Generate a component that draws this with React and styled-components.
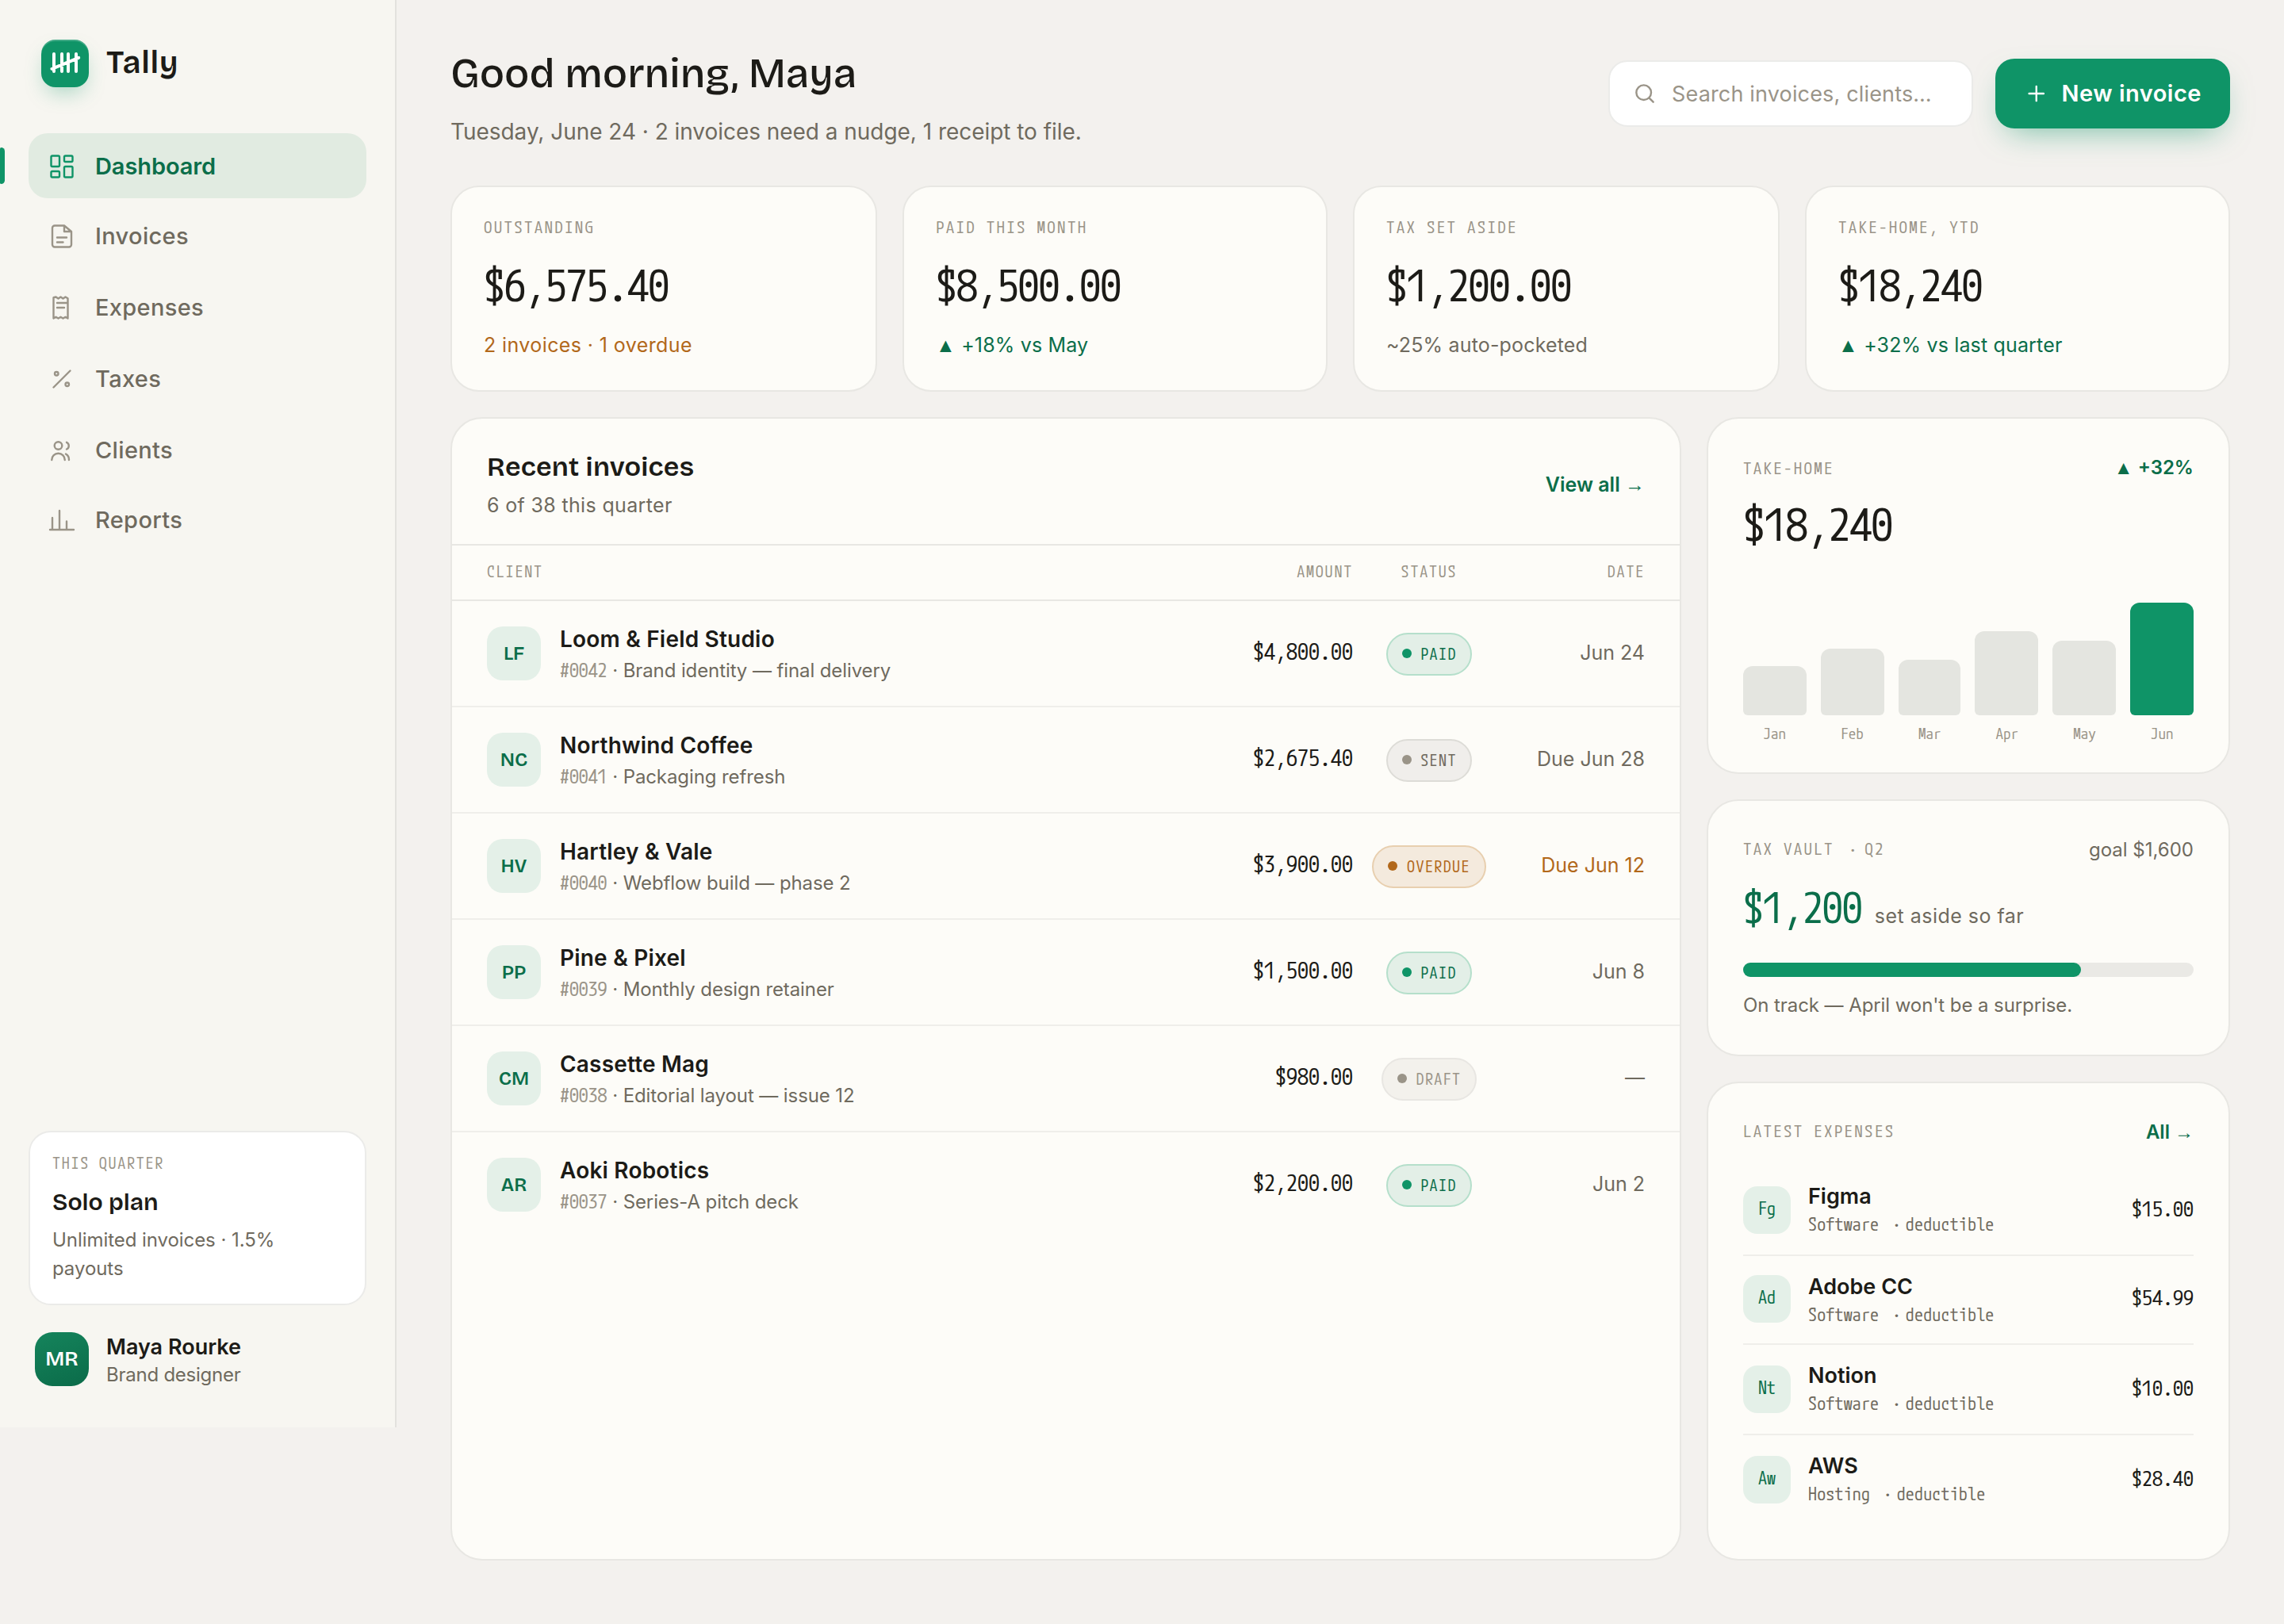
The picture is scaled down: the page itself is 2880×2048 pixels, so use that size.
import React from "react";
import styled, { createGlobalStyle, css } from "styled-components";

const sans = `"Inter", "Liberation Sans", sans-serif`;
const display = `"Bricolage Grotesque", "Inter", sans-serif`;
const mono = `"M PLUS 1 Code", "Noto Sans Mono CJK SC", "Liberation Mono", monospace`;

const ink = "#1c1b17";
const muted = "#6f6a5e";
const faint = "#9a9488";
const green = "#0f9467";
const deep = "#0b6e4a";
const amber = "#b2681a";
const line = "#e8e7e3";
const softLine = "#efeeea";
const tint = "#e4f0e8";

const GlobalStyle = createGlobalStyle`
  * {
    box-sizing: border-box;
  }

  body {
    margin: 0;
    background: #f3f1ee;
  }

  h1, h2, p {
    margin: 0;
  }
`;

const Page = styled.div`
  width: 2880px;
  height: 2048px;
  overflow: hidden;
`;

/* the design is 1440 x 1024, shown at double size */
const Shell = styled.div`
  width: 1440px;
  height: 1024px;
  transform: scale(2);
  transform-origin: 0 0;
  display: flex;
  align-items: flex-start;
  background: #f3f1ee;
  color: ${ink};
  font-family: ${sans};
  font-size: 14px;
  font-optical-sizing: none;
`;

const Label = styled.div`
  font-family: ${mono};
  font-size: 10.5px;
  line-height: 16px;
  letter-spacing: 1.13px;
  text-transform: uppercase;
  color: ${faint};
`;

/* arrows and triangles are lighter than the text font draws them */
const Glyph = styled.span`
  font-family: "Liberation Sans", sans-serif;
  line-height: 1;
`;

/* the mono font has a narrow middle dot, so give it a full cell */
const Dot = styled.span`
  display: inline-block;
  width: ${({ $wide }) => ($wide ? "0.61em" : "0.51em")};
  text-align: center;
`;

/* ---- sidebar ---- */

const Sidebar = styled.aside`
  width: 250px;
  height: 900px;
  padding: 25px 18px 26px;
  display: flex;
  flex-direction: column;
  background: #f7f6f1;
  border-right: 1px solid #e3e2de;
`;

const Brand = styled.div`
  display: flex;
  align-items: center;
  gap: 11px;
  padding: 0 8px;
  height: 30px;
  font-family: ${display};
  font-size: 20px;
  font-weight: 600;
  line-height: 24px;
  letter-spacing: 0.35px;
`;

const Mark = styled.div`
  width: 30px;
  height: 30px;
  border-radius: 9px;
  background: ${green};
  box-shadow: inset 0 1px 0 rgba(255, 255, 255, 0.2),
    0 6px 14px -4px rgba(15, 148, 103, 0.4);

  svg {
    display: block;
  }
`;

const BrandName = styled.span`
  padding-bottom: 2.6px;
`;

const Nav = styled.nav`
  display: flex;
  flex-direction: column;
  gap: 4px;
  margin-top: 29px;
`;

const NavItem = styled.a`
  position: relative;
  display: flex;
  align-items: center;
  gap: 12px;
  height: 40.75px;
  padding: 0.7px 12px 0;
  border-radius: 12px;
  font-size: 14.5px;
  font-weight: 500;
  line-height: 22px;
  letter-spacing: 0.17px;
  color: ${muted};

  svg {
    color: ${faint};
  }

  ${({ $active }) =>
    $active &&
    css`
      background: #e1ebe1;
      color: ${deep};
      font-weight: 600;
      letter-spacing: -0.05px;

      svg {
        color: ${green};
      }

      &::before {
        content: "";
        position: absolute;
        left: -18px;
        top: 9px;
        width: 3px;
        height: 23px;
        border-radius: 1px 3px 3px 1px;
        background: ${green};
      }
    `}
`;

const PlanCard = styled.div`
  margin-top: auto;
  height: 110px;
  padding: 12px 14px;
  border: 1px solid #ebebe9;
  border-radius: 14px;
  background: #fff;
`;

const PlanLabel = styled(Label)`
  font-size: 10px;
  line-height: 15px;
  letter-spacing: 0.87px;
`;

const PlanName = styled.div`
  margin-top: 6px;
  font-family: ${display};
  font-size: 15px;
  font-weight: 600;
  line-height: 22px;
`;

const PlanText = styled.p`
  margin-top: 3.8px;
  font-size: 12px;
  line-height: 18px;
  letter-spacing: -0.03px;
  color: ${muted};
`;

const User = styled.div`
  display: flex;
  align-items: center;
  gap: 11px;
  height: 34px;
  margin-top: 17px;
  padding: 0 4px;
`;

const UserBadge = styled.div`
  display: flex;
  align-items: center;
  justify-content: center;
  width: 34px;
  height: 34px;
  border-radius: 11px;
  background: linear-gradient(160deg, #15845c, #0b6b49);
  color: #fff;
  font-family: ${display};
  font-size: 13px;
  font-weight: 600;
`;

const UserName = styled.div`
  padding-top: 1px;
  font-size: 13.5px;
  font-weight: 600;
  line-height: 18px;
`;

const UserRole = styled.div`
  padding-top: 0.8px;
  font-size: 12px;
  line-height: 16px;
  letter-spacing: -0.12px;
  color: ${muted};
`;

/* ---- main column ---- */

const Main = styled.main`
  width: 1190px;
  padding: 24px 34px 40px;
`;

const Header = styled.header`
  display: flex;
  align-items: center;
  height: 70px;
`;

const Greeting = styled.div`
  flex: 1;
  padding-top: 5px;
`;

const Title = styled.h1`
  font-family: ${display};
  font-size: 26px;
  font-weight: 500;
  line-height: 33px;
`;

const Subtitle = styled.p`
  margin-top: 9px;
  font-size: 14px;
  line-height: 21px;
  letter-spacing: -0.02px;
  color: ${muted};
`;

const Search = styled.div`
  display: flex;
  align-items: center;
  gap: 9px;
  width: 230px;
  height: 42px;
  padding: 0 14px;
  border: 1px solid #ebebe9;
  border-radius: 12px;
  background: #fff;
  color: ${faint};
  font-size: 13.5px;
  letter-spacing: 0.08px;
`;

const NewButton = styled.button`
  display: flex;
  align-items: center;
  gap: 8px;
  width: 148px;
  height: 44px;
  margin-left: 14px;
  padding: 0 18px 1px;
  border: none;
  border-radius: 12px;
  background: ${green};
  box-shadow: 0 8px 20px -8px rgba(15, 148, 103, 0.6);
  color: #fff;
  font-family: ${sans};
  font-size: 14.5px;
  font-weight: 600;
  letter-spacing: 0.25px;
  white-space: nowrap;
`;

const Stats = styled.section`
  display: grid;
  grid-template-columns: 269px 268px 269px 268px;
  gap: 16px;
  margin-top: 23px;
`;

const Card = styled.section`
  border: 1px solid ${line};
  border-radius: 20px;
  background: #fdfcf8;
`;

const StatCard = styled(Card)`
  height: 130px;
  padding: 17px 20px 0;
  border-radius: 18px;
`;

const StatValue = styled.div`
  margin-top: 11.5px;
  font-family: ${mono};
  font-size: 27px;
  line-height: 34px;
  letter-spacing: -0.55px;
`;

const tones = { amber, green: deep, muted };

const StatNote = styled.div`
  margin-top: 12.5px;
  font-size: 12.5px;
  line-height: 18px;
  letter-spacing: ${({ $tone }) => ($tone === "amber" ? "0.2px" : "0.08px")};
  color: ${({ $tone }) => tones[$tone]};
`;

const Columns = styled.div`
  display: grid;
  grid-template-columns: 776px 330px;
  gap: 16px;
  height: 721px;
  margin-top: 16px;
`;

/* ---- invoices ---- */

const InvoiceHead = styled.div`
  display: flex;
  align-items: center;
  justify-content: space-between;
  height: 80px;
  padding: 4px 22px 0;
  border-bottom: 1px solid ${line};
`;

const PanelTitle = styled.h2`
  padding-bottom: 2.4px;
  font-family: ${display};
  font-size: 17px;
  font-weight: 600;
  line-height: 24px;
  letter-spacing: 0.09px;
`;

const PanelNote = styled.p`
  font-size: 12.5px;
  line-height: 19px;
  letter-spacing: 0.17px;
  color: ${muted};
`;

const Link = styled.a`
  padding-top: ${({ $small }) => ($small ? 1.4 : 0.8)}px;
  font-size: ${({ $small }) => ($small ? 12 : 12.5)}px;
  font-weight: 600;
  line-height: 18px;
  color: ${deep};
`;

const Trend = styled(Link)`
  padding-top: 0;
`;

const Row = styled.div`
  display: grid;
  grid-template-columns: 1fr 100px 96px 88px;
  align-items: center;
  height: 67px;
  padding: 0 22px;
  border-bottom: 1px solid ${softLine};

  &:last-child {
    border-bottom-color: transparent;
  }
`;

const HeadRow = styled(Row)`
  height: 35px;
  padding-bottom: 2px;
  border-bottom-color: ${line};
  font-family: ${mono};
  font-size: 10px;
  letter-spacing: 0.9px;
  text-transform: uppercase;
  color: ${faint};
`;

const Cell = styled.div`
  text-align: ${({ $align }) => $align || "left"};
`;

const Client = styled.div`
  display: flex;
  align-items: center;
  gap: 12px;
`;

const Initials = styled.div`
  display: flex;
  align-items: center;
  justify-content: center;
  width: 34px;
  height: 34px;
  border-radius: 10px;
  background: ${tint};
  color: ${deep};
  font-family: ${display};
  font-size: 12px;
  font-weight: 600;
`;

const ClientName = styled.div`
  padding: 1px 0 2px;
  font-size: 14px;
  font-weight: 600;
  line-height: 19.6px;
  letter-spacing: 0.1px;
`;

const ClientWork = styled.div`
  font-size: 12px;
  line-height: 18px;
  letter-spacing: -0.05px;
  color: ${muted};

  span {
    font-family: ${mono};
    line-height: 12px;
    color: ${faint};
  }
`;

const Amount = styled.div`
  padding-bottom: 2.4px;
  font-family: ${mono};
  font-size: ${({ $size }) => $size || 14}px;
  line-height: 20px;
  text-align: right;
`;

const DateText = styled.div`
  padding-bottom: 1px;
  font-size: 12.5px;
  line-height: 20px;
  text-align: right;
  color: ${({ $late }) => ($late ? amber : muted)};
`;

const pillColors = {
  Paid: { bg: "#e3efe7", edge: "#b5dfcb", text: deep, dot: green },
  Sent: { bg: "#f0eeeb", edge: "#dddcd7", text: muted, dot: faint },
  Overdue: { bg: "#f4eadd", edge: "#e8cfaf", text: amber, dot: amber },
  Draft: { bg: "#f3f1ec", edge: "#e8e6e2", text: faint, dot: faint },
};

const Pill = styled.span`
  display: inline-flex;
  align-items: center;
  gap: 6px;
  height: 27px;
  margin-top: 1px;
  padding: 0 9px 0.6px;
  border: 1px solid ${({ $status }) => pillColors[$status].edge};
  border-radius: 14px;
  background: ${({ $status }) => pillColors[$status].bg};
  color: ${({ $status }) => pillColors[$status].text};
  font-family: ${mono};
  font-size: 10px;
  line-height: 15px;
  letter-spacing: 0.7px;
  text-transform: uppercase;
  vertical-align: top;

  &::before {
    content: "";
    width: 6px;
    height: 6px;
    border-radius: 50%;
    background: ${({ $status }) => pillColors[$status].dot};
  }
`;

/* ---- right column ---- */

const SideColumn = styled.div`
  display: flex;
  flex-direction: column;
  gap: 16px;
`;

const SideCard = styled(Card)`
  height: ${({ $height }) => $height}px;
  padding: 20px 22px 0;
`;

const CardTop = styled.div`
  display: flex;
  align-items: center;
  justify-content: space-between;
  height: 20px;
`;

const TakeHomeCard = styled(SideCard)`
  padding-top: 21px;
`;

const TakeHome = styled.div`
  margin-top: 8px;
  font-family: ${mono};
  font-size: 28px;
  line-height: 36px;
  letter-spacing: -0.02em;
`;

const Chart = styled.div`
  display: grid;
  grid-template-columns: repeat(6, 1fr);
  align-items: end;
  gap: 9px;
  height: 89px;
  margin-top: 31px;
`;

const Month = styled.div`
  font-family: ${mono};
  font-size: 9.5px;
  line-height: 14px;
  text-align: center;
  color: ${faint};
`;

const Bar = styled.div`
  margin-bottom: 4px;
  border-radius: 6px 6px 3px 3px;
  background: ${({ $current }) => ($current ? green : "#e4e5e0")};
`;

const Goal = styled.span`
  padding-top: 1.8px;
  font-size: 12px;
  line-height: 18px;
  color: ${muted};
`;

const Vault = styled.div`
  display: flex;
  align-items: baseline;
  gap: 8px;
  margin-top: 9px;
  height: 36px;
`;

const VaultValue = styled.span`
  font-family: ${mono};
  font-size: 26px;
  line-height: 36px;
  letter-spacing: -0.02em;
  color: ${deep};
`;

const VaultCaption = styled.span`
  font-size: 12.5px;
  line-height: 18px;
  letter-spacing: 0.24px;
  color: ${muted};
`;

const Track = styled.div`
  height: 9px;
  margin-top: 17px;
  border-radius: 5px;
  background: #eae9e5;
`;

const Fill = styled.div`
  height: 9px;
  border-radius: 5px;
  background: ${green};
`;

const VaultNote = styled.p`
  margin-top: 9px;
  font-size: 12px;
  line-height: 18px;
  letter-spacing: -0.04px;
  color: ${muted};
`;

const ExpenseList = styled.div`
  margin-top: 12.1px;
`;

const Expense = styled.div`
  display: flex;
  align-items: center;
  gap: 11px;
  height: 56.55px;
  border-bottom: 1px solid ${softLine};

  &:last-child {
    border-bottom: none;
  }
`;

const Vendor = styled.div`
  display: flex;
  align-items: center;
  justify-content: center;
  width: 30px;
  height: 30px;
  padding-bottom: 2px;
  border-radius: 9px;
  background: ${tint};
  color: ${deep};
  font-family: ${mono};
  font-size: 11px;
`;

const ExpenseText = styled.div`
  flex: 1;
  padding-bottom: 1.4px;
`;

const ExpenseName = styled.div`
  font-size: 13.5px;
  font-weight: 600;
  line-height: 20px;
`;

const ExpenseKind = styled.div`
  font-family: ${mono};
  font-size: 11px;
  line-height: 16px;
  letter-spacing: 0.08px;
  color: ${muted};
`;

/* ---- icons ---- */

const Icon = ({ size = 18, weight = 1.6, children }) => (
  <svg
    width={size}
    height={size}
    viewBox="0 0 24 24"
    fill="none"
    stroke="currentColor"
    strokeWidth={weight}
    strokeLinecap="round"
    strokeLinejoin="round"
  >
    {children}
  </svg>
);

const TallyMark = () => (
  <svg width="30" height="30" viewBox="0 0 30 30" fill="none" stroke="#fff" strokeWidth="2" strokeLinecap="round">
    <path d="M8 9v11M13 9v11M17 9v11M22 9v11M6.7 18.4L23.6 11.4" />
  </svg>
);

const navItems = [
  {
    name: "Dashboard",
    icon: (
      <>
        <rect x="3" y="3" width="7" height="9" rx="1" />
        <rect x="14" y="3" width="7" height="5" rx="1" />
        <rect x="14" y="12" width="7" height="9" rx="1" />
        <rect x="3" y="16" width="7" height="5" rx="1" />
      </>
    ),
  },
  {
    name: "Invoices",
    icon: <path d="M14 3H6a2 2 0 0 0-2 2v14a2 2 0 0 0 2 2h12a2 2 0 0 0 2-2V8l-6-5v5h6M8 13h8M8 17h5" />,
  },
  {
    name: "Expenses",
    icon: <path d="M5 3.5L7 3l2 1.4L11 3l2 1.4L15 3l2 1.2V21l-2-1.2-2 1.2-2-1.2L9 21l-2-1.2L5 21V3.5zM8 8h8M8 12h6" />,
  },
  {
    name: "Taxes",
    icon: (
      <>
        <path d="M5 19L19 5" />
        <circle cx="7.5" cy="7.5" r="1.5" />
        <circle cx="16.5" cy="16.5" r="1.5" />
      </>
    ),
  },
  {
    name: "Clients",
    icon: (
      <>
        <circle cx="9" cy="8" r="3.2" />
        <path d="M3.5 20a5.5 5.5 0 0 1 11 0M16 5.2a3.2 3.2 0 0 1 0 5.8M15.3 15a5.5 5.5 0 0 1 2.7 5" />
      </>
    ),
  },
  {
    name: "Reports",
    icon: <path d="M4 20V10M10 20V4M16 20v-7M2 20h20" />,
  },
];

const stats = [
  { label: "Outstanding", value: "$6,575.40", note: "2 invoices · 1 overdue", tone: "amber" },
  { label: "Paid this month", value: "$8,500.00", note: "+18% vs May", tone: "green", up: true },
  { label: "Tax set aside", value: "$1,200.00", note: "~25% auto-pocketed", tone: "muted" },
  { label: "Take-home, YTD", value: "$18,240", note: "+32% vs last quarter", tone: "green", up: true },
];

const invoices = [
  { mark: "LF", name: "Loom & Field Studio", id: "#0042", work: "Brand identity — final delivery", amount: "$4,800.00", status: "Paid", date: "Jun 24" },
  { mark: "NC", name: "Northwind Coffee", id: "#0041", work: "Packaging refresh", amount: "$2,675.40", status: "Sent", date: "Due Jun 28" },
  { mark: "HV", name: "Hartley & Vale", id: "#0040", work: "Webflow build — phase 2", amount: "$3,900.00", status: "Overdue", date: "Due Jun 12" },
  { mark: "PP", name: "Pine & Pixel", id: "#0039", work: "Monthly design retainer", amount: "$1,500.00", status: "Paid", date: "Jun 8" },
  { mark: "CM", name: "Cassette Mag", id: "#0038", work: "Editorial layout — issue 12", amount: "$980.00", status: "Draft", date: "—" },
  { mark: "AR", name: "Aoki Robotics", id: "#0037", work: "Series-A pitch deck", amount: "$2,200.00", status: "Paid", date: "Jun 2" },
];

const months = [
  { name: "Jan", height: 31 },
  { name: "Feb", height: 42 },
  { name: "Mar", height: 35 },
  { name: "Apr", height: 53 },
  { name: "May", height: 47 },
  { name: "Jun", height: 71 },
];

const expenses = [
  { mark: "Fg", name: "Figma", kind: "Software", amount: "$15.00" },
  { mark: "Ad", name: "Adobe CC", kind: "Software", amount: "$54.99" },
  { mark: "Nt", name: "Notion", kind: "Software", amount: "$10.00" },
  { mark: "Aw", name: "AWS", kind: "Hosting", amount: "$28.40" },
];

const App = () => {
  return (
    <Page>
      <GlobalStyle />
      <Shell>
        <Sidebar>
          <Brand>
            <Mark>
              <TallyMark />
            </Mark>
            <BrandName>Tally</BrandName>
          </Brand>
          <Nav>
            {navItems.map((item) => (
              <NavItem key={item.name} $active={item.name === "Dashboard"}>
                <Icon>{item.icon}</Icon>
                {item.name}
              </NavItem>
            ))}
          </Nav>
          <PlanCard>
            <PlanLabel>This quarter</PlanLabel>
            <PlanName>Solo plan</PlanName>
            <PlanText>Unlimited invoices · 1.5% payouts</PlanText>
          </PlanCard>
          <User>
            <UserBadge>MR</UserBadge>
            <div>
              <UserName>Maya Rourke</UserName>
              <UserRole>Brand designer</UserRole>
            </div>
          </User>
        </Sidebar>

        <Main>
          <Header>
            <Greeting>
              <Title>Good morning, Maya</Title>
              <Subtitle>Tuesday, June 24 · 2 invoices need a nudge, 1 receipt to file.</Subtitle>
            </Greeting>
            <Search>
              <Icon size={16} weight={1.8}>
                <circle cx="11" cy="11" r="7" />
                <path d="M20 20l-3.8-3.8" />
              </Icon>
              Search invoices, clients…
            </Search>
            <NewButton type="button">
              <Icon size={16} weight={1.8}>
                <path d="M12 5v14M5 12h14" />
              </Icon>
              New invoice
            </NewButton>
          </Header>

          <Stats>
            {stats.map((s) => (
              <StatCard key={s.label}>
                <Label>{s.label}</Label>
                <StatValue>{s.value}</StatValue>
                <StatNote $tone={s.tone}>
                  {s.up && <Glyph>▲</Glyph>} {s.note}
                </StatNote>
              </StatCard>
            ))}
          </Stats>

          <Columns>
            <Card>
              <InvoiceHead>
                <div>
                  <PanelTitle>Recent invoices</PanelTitle>
                  <PanelNote>6 of 38 this quarter</PanelNote>
                </div>
                <Link>
                  View all <Glyph>→</Glyph>
                </Link>
              </InvoiceHead>
              <HeadRow>
                <Cell>Client</Cell>
                <Cell $align="right">Amount</Cell>
                <Cell $align="center">Status</Cell>
                <Cell $align="right">Date</Cell>
              </HeadRow>
              {invoices.map((inv) => (
                <Row key={inv.id}>
                  <Client>
                    <Initials>{inv.mark}</Initials>
                    <div>
                      <ClientName>{inv.name}</ClientName>
                      <ClientWork>
                        <span>{inv.id}</span> · {inv.work}
                      </ClientWork>
                    </div>
                  </Client>
                  <Amount>{inv.amount}</Amount>
                  <Cell $align="center">
                    <Pill $status={inv.status}>{inv.status}</Pill>
                  </Cell>
                  <DateText $late={inv.status === "Overdue"}>{inv.date}</DateText>
                </Row>
              ))}
            </Card>

            <SideColumn>
              <TakeHomeCard $height={225}>
                <CardTop>
                  <Label>Take-home</Label>
                  <Trend $small>
                    <Glyph>▲</Glyph> +32%
                  </Trend>
                </CardTop>
                <TakeHome>$18,240</TakeHome>
                <Chart>
                  {months.map((m) => (
                    <div key={m.name}>
                      <Bar $current={m.name === "Jun"} style={{ height: m.height }} />
                      <Month>{m.name}</Month>
                    </div>
                  ))}
                </Chart>
              </TakeHomeCard>

              <SideCard $height={162}>
                <CardTop>
                  <Label>
                    Tax vault <Dot $wide>·</Dot> Q2
                  </Label>
                  <Goal>goal $1,600</Goal>
                </CardTop>
                <Vault>
                  <VaultValue>$1,200</VaultValue>
                  <VaultCaption>set aside so far</VaultCaption>
                </Vault>
                <Track>
                  <Fill style={{ width: `${(1200 / 1600) * 100}%` }} />
                </Track>
                <VaultNote>On track — April won't be a surprise.</VaultNote>
              </SideCard>

              <SideCard $height={302}>
                <CardTop>
                  <Label>Latest expenses</Label>
                  <Link $small>
                    All <Glyph>→</Glyph>
                  </Link>
                </CardTop>
                <ExpenseList>
                  {expenses.map((e) => (
                    <Expense key={e.name}>
                      <Vendor>{e.mark}</Vendor>
                      <ExpenseText>
                        <ExpenseName>{e.name}</ExpenseName>
                        <ExpenseKind>
                          {e.kind} <Dot>·</Dot> deductible
                        </ExpenseKind>
                      </ExpenseText>
                      <Amount $size={13}>{e.amount}</Amount>
                    </Expense>
                  ))}
                </ExpenseList>
              </SideCard>
            </SideColumn>
          </Columns>
        </Main>
      </Shell>
    </Page>
  );
};

export default App;
